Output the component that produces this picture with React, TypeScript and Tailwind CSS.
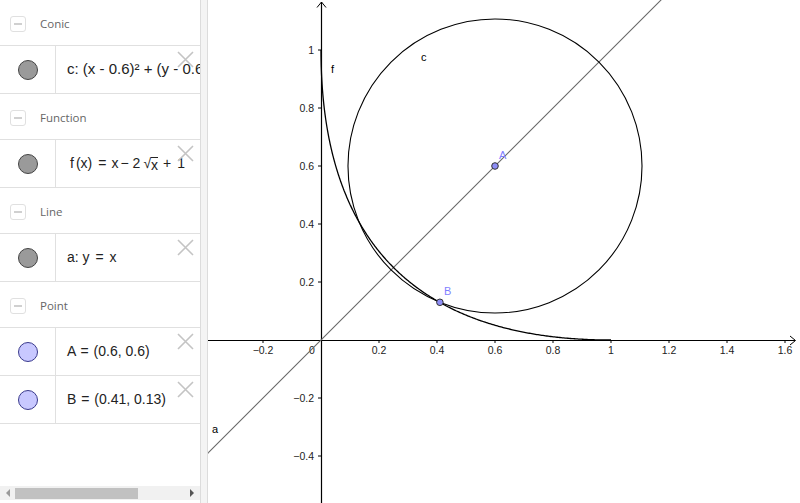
import React from "react";

const X = (x: number) => 321 + 290 * x;
const Y = (y: number) => 340 - 290 * y;

function fPath() {
  const pts: string[] = [];
  const n = 400;
  for (let i = 0; i <= n; i++) {
    const t = i / n;
    const x = t * t;
    const y = Math.pow(Math.sqrt(x) - 1, 2);
    pts.push(`${X(x).toFixed(2)},${Y(y).toFixed(2)}`);
  }
  return "M" + pts.join(" L");
}

const CloseX = () => (
  <svg width="17" height="17" viewBox="0 0 17 17" className="absolute right-[6px] top-[5px]">
    <path d="M1 1 L16 16 M16 1 L1 16" stroke="#c4c4c4" strokeWidth="1.6" fill="none" />
  </svg>
);

const Header = ({ title }: { title: string }) => (
  <div className="h-[45px] flex items-center pt-[3px]">
    <div className="ml-[10px] w-[16px] h-[16px] rounded-[3px] border border-[#e0e0e0] flex items-center justify-center">
      <div className="w-[8px] h-[2px] bg-[#d0d0d0]" />
    </div>
    <span className="ml-[14px] text-[11.5px] text-[#666] font-['Open_Sans',sans-serif]">{title}</span>
  </div>
);

const Item = ({
  children,
  point,
  last,
  size,
}: {
  children: React.ReactNode;
  point?: boolean;
  last?: boolean;
  size?: string;
}) => (
  <div className={`h-[47px] box-content flex border-t border-[#e0e0e0] relative ${last ? "border-b" : ""}`}>
    <div className="w-[56px] border-r border-[#e0e0e0] flex items-center justify-center">
      <div
        className={`w-[20px] h-[20px] rounded-full border ${
          point ? "bg-[#c8c8ff] border-[#3a3a8c]" : "bg-[#9a9a9a] border-[#444]"
        }`}
      />
    </div>
    <div
      className={`flex-1 flex items-center pl-[11px] whitespace-nowrap overflow-hidden ${
        size === "lg" ? "text-[15px]" : "text-[14px]"
      } text-[#222] font-['Liberation_Sans',Arial,sans-serif]`}
    >
      {children}
    </div>
    <CloseX />
  </div>
);

export default function App() {
  const xTicks = [-0.2, 0.2, 0.4, 0.6, 0.8, 1, 1.2, 1.4, 1.6];
  const yTicks = [-0.4, -0.2, 0.2, 0.4, 0.6, 0.8, 1];
  const fmt = (v: number) => (v < 0 ? "\u2212" + Math.abs(v) : String(v));
  const r = Math.sqrt(0.19 * 0.19 + 0.47 * 0.47) * 290;
  const ff = "'Liberation Sans', Arial, sans-serif";

  return (
    <div className="flex w-[800px] h-[503px] overflow-hidden bg-white">
      <div className="w-[200px] h-full flex flex-col">
        <Header title="Conic" />
        <Item last size="lg">
          <span>c: (x - 0.6)² + (y - 0.6)² = 0.26</span>
        </Item>
        <Header title="Function" />
        <Item last>
          <span className="flex items-center pl-[3px]">
            <span>f</span>
            <span className="ml-[2px]">(x)</span>
            <span className="ml-[6px] mr-[5px]">=</span>
            <span>x</span>
            <span className="mx-[2px]">−</span>
            <span className="ml-[2px]">2</span>
            <span className="ml-[3px]">√</span>
            <span className="border-t border-[#222] leading-[14px] mt-[1px]">x</span>
            <span className="ml-[5px] mr-[6px]">+</span>
            <span>1</span>
          </span>
        </Item>
        <Header title="Line" />
        <Item last>
          <span>
            a: y <span className="mx-[2px]">=</span> x
          </span>
        </Item>
        <Header title="Point" />
        <Item point>
          <span>
            A <span className="mx-[1px]">=</span> (0.6, 0.6)
          </span>
        </Item>
        <Item point last>
          <span>
            B <span className="mx-[1px]">=</span> (0.41, 0.13)
          </span>
        </Item>
        <div className="mt-auto mb-[3px] h-[14px] bg-[#f1f1f1] relative flex items-center">
          <svg width="6" height="8" viewBox="0 0 6 8" className="ml-[5px]">
            <path d="M5 0 L1 4 L5 8 Z" fill="#9a9a9a" />
          </svg>
          <div className="ml-[4px] w-[123px] h-[11px] bg-[#c1c1c1]" />
          <div className="flex-1" />
          <svg width="6" height="8" viewBox="0 0 6 8" className="mr-[5px]">
            <path d="M1 0 L5 4 L1 8 Z" fill="#555" />
          </svg>
        </div>
      </div>
      <div className="w-[8px] h-full border-l border-r border-[#dcdcdc] bg-[#f4f4f4]" />
      <div className="flex-1 h-full">
        <svg width="592" height="503" viewBox="208 0 592 503" className="block">
          <line x1="208" y1="340.5" x2="795" y2="340.5" stroke="#000" strokeWidth="1.2" />
          <path d="M790 336 L795.5 340.5 L790 345" stroke="#000" strokeWidth="1" fill="none" />
          <line x1="321.5" y1="2" x2="321.5" y2="503" stroke="#000" strokeWidth="1.2" />
          <path d="M317 7.5 L321.5 2 L326 7.5" stroke="#000" strokeWidth="1" fill="none" />
          {xTicks.map((v) => (
            <g key={"x" + v}>
              <line x1={X(v)} y1="340" x2={X(v)} y2="343" stroke="#000" strokeWidth="1" />
              <text x={X(v)} y="354" textAnchor="middle" fontSize="10.5" fontFamily={ff} fill="#222">
                {fmt(v)}
              </text>
            </g>
          ))}
          <text x="312" y="354" textAnchor="middle" fontSize="10.5" fontFamily={ff} fill="#222">
            0
          </text>
          {yTicks.map((v) => (
            <g key={"y" + v}>
              <line x1="318" y1={Y(v)} x2="321" y2={Y(v)} stroke="#000" strokeWidth="1" />
              <text x="314" y={Y(v) + 3.5} textAnchor="end" fontSize="10.5" fontFamily={ff} fill="#222">
                {fmt(v)}
              </text>
            </g>
          ))}
          <line x1={X(-0.45)} y1={Y(-0.45)} x2={X(1.25)} y2={Y(1.25)} stroke="#666" strokeWidth="1.1" />
          <circle cx={X(0.6)} cy={Y(0.6)} r={r} stroke="#000" strokeWidth="1.1" fill="none" />
          <path d={fPath()} stroke="#000" strokeWidth="1.3" fill="none" />
          <text x="331" y="73" fontSize="11" fontFamily={ff} fill="#000">f</text>
          <text x="421" y="61" fontSize="11" fontFamily={ff} fill="#000">c</text>
          <text x="212" y="433" fontSize="11" fontFamily={ff} fill="#000">a</text>
          <text x="499" y="159" fontSize="11" fontFamily={ff} fill="#7f7fff">A</text>
          <text x="444" y="295" fontSize="11" fontFamily={ff} fill="#7f7fff">B</text>
          <circle cx={X(0.6)} cy={Y(0.6)} r="3.3" fill="#8d8df5" stroke="#333" strokeWidth="1" />
          <circle cx={X(0.41)} cy={Y(0.13)} r="3.3" fill="#8d8df5" stroke="#333" strokeWidth="1" />
        </svg>
      </div>
    </div>
  );
}
